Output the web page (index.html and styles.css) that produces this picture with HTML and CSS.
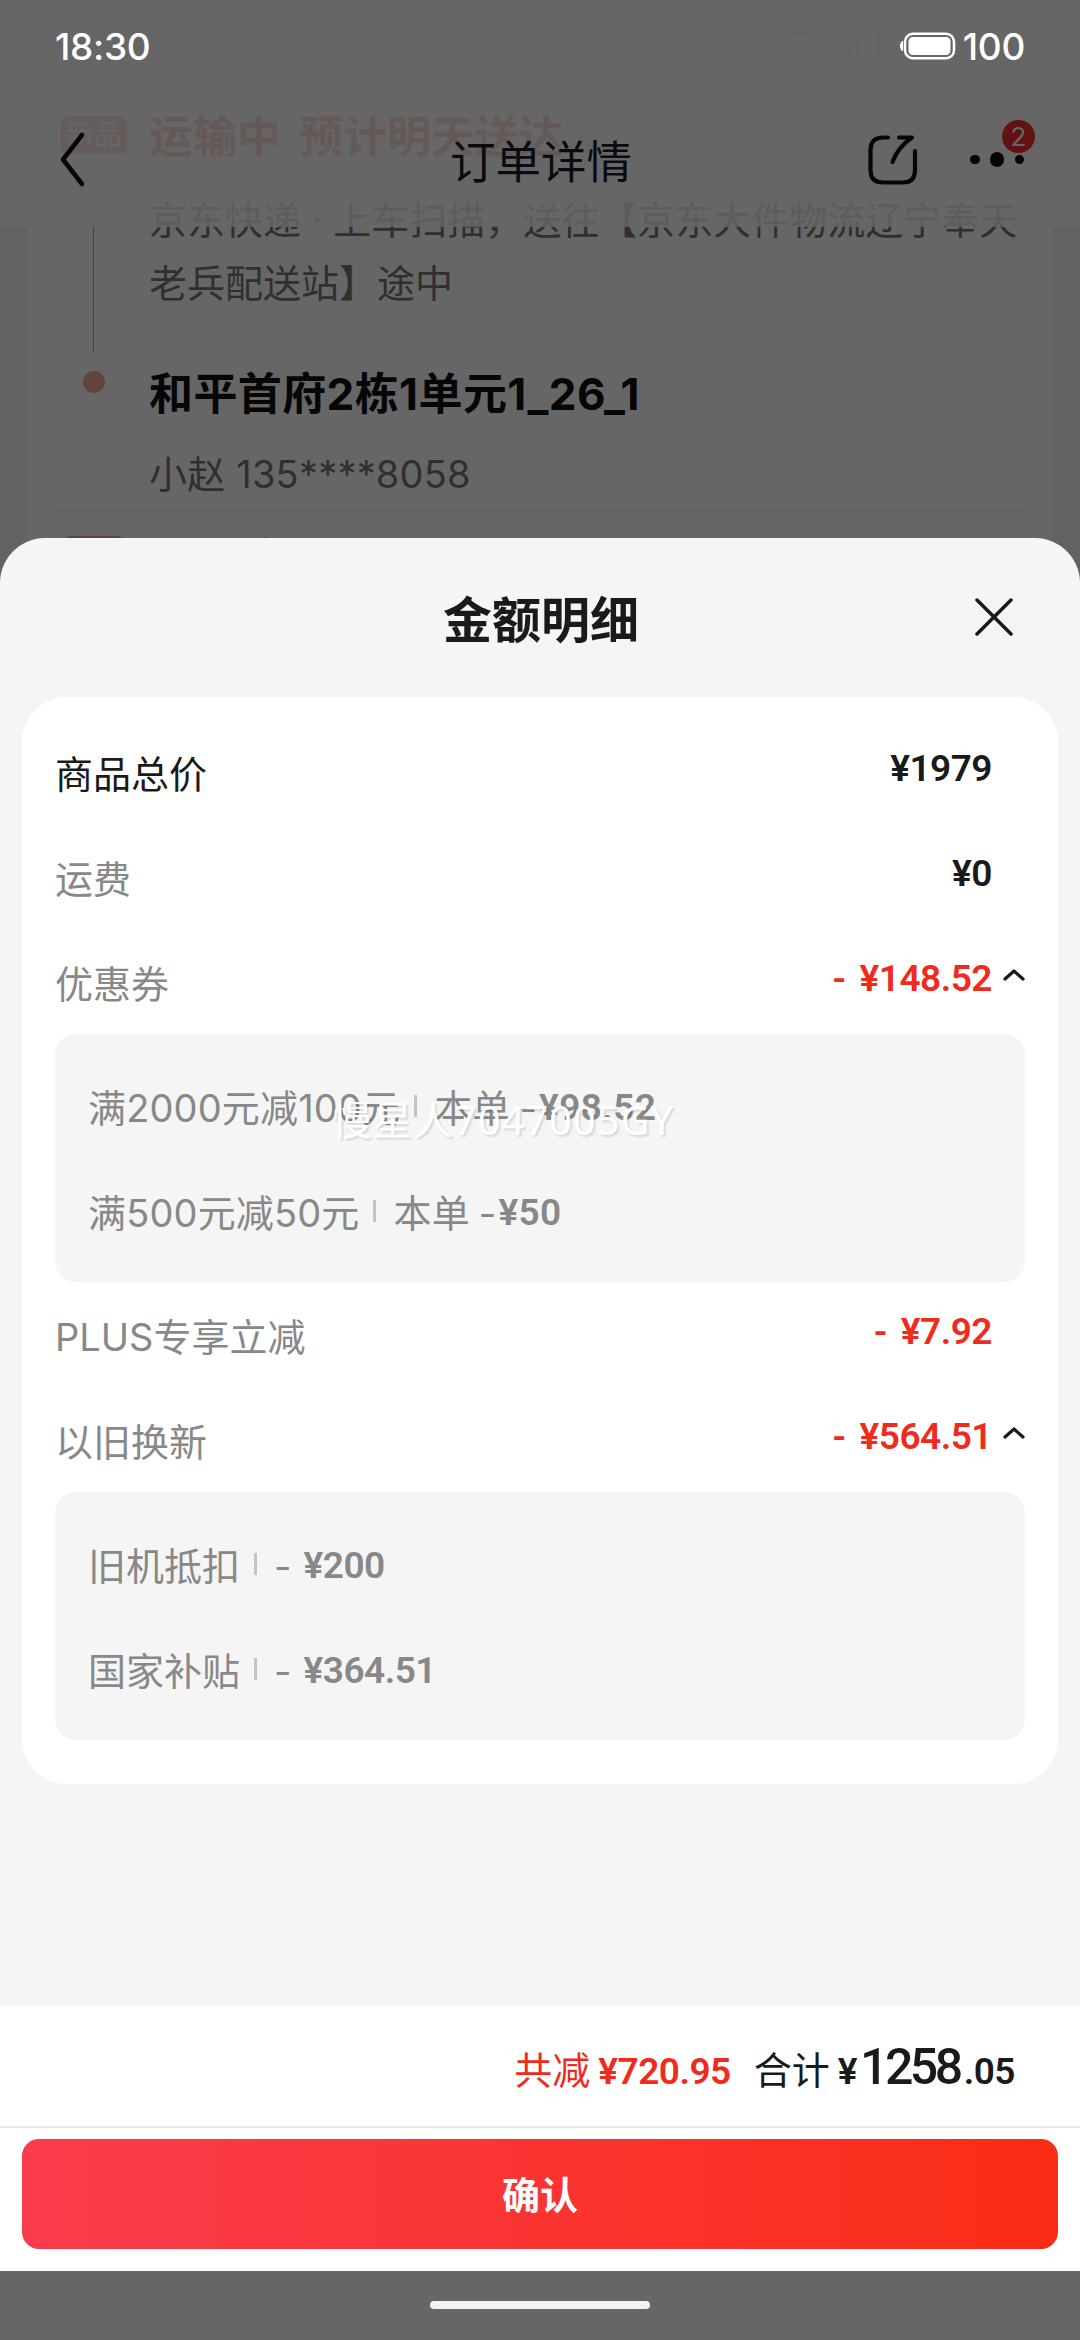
FILE: index.html
```html
<!DOCTYPE html>
<html lang="zh-CN">
<head>
<meta charset="utf-8">
<title>订单详情</title>
<link rel="stylesheet" href="styles.css">
</head>
<body>
<div class="screen">
  <div class="order">
    <section class="track">
      <div class="step">
        <div class="rail"><span class="tag">新品</span></div>
        <div class="info">
          <h2 class="state"><span>运输中</span><span>预计明天送达</span></h2>
          <p class="desc">京东快递 · 上车扫描，送往【京东大件物流辽宁奉天老兵配送站】途中</p>
        </div>
      </div>
      <div class="step address">
        <div class="rail"><span class="dot"></span></div>
        <div class="info">
          <h2 class="place">和平首府2栋1单元1_26_1</h2>
          <p class="contact">小赵 135****8058</p>
        </div>
      </div>
      <div class="next"><span class="next-tag"></span><span class="next-text">下单方式</span></div>
    </section>
    <span class="line"></span>
    <header class="nav">
      <svg class="back" viewBox="0 0 30 60"><path d="M25 5 6 29.500 25 54"/></svg>
      <h1 class="nav-title">订单详情</h1>
      <svg class="share" viewBox="0 0 56 56"><path d="M23 5.500H18Q5.500 5.500 5.500 18V38Q5.500 50.500 18 50.500H38Q50 50.500 50 38V19M34 5.500H47Q33 15 27.500 30"/></svg>
      <div class="more"><i></i><i class="big"></i><i></i><b class="badge">2</b></div>
    </header>
  </div>
  <div class="mask"></div>

  <div class="status">
    <span>18:30</span>
    <span class="power">
      <svg class="signal" viewBox="0 0 100 40"><path d="M2 13Q17 0 32 13M8 20Q17 12 26 20M17 28v3M60 26v8M68 20v14M76 10v24M94 4v30"/></svg>
      <svg class="battery" viewBox="0 0 58 30"><path class="fill" d="M4 9.500Q1 11 1 15T4 20.500Z"/><rect class="case" x="6" y="2.750" width="49" height="24.500" rx="8"/><rect class="fill" x="9.500" y="6" width="42" height="18" rx="4.500"/></svg>
      <span>100</span>
    </span>
  </div>

  <main class="sheet">
    <header class="sheet-head">
      <h2>金额明细</h2>
      <svg class="close" viewBox="0 0 38 38"><path d="M2 2 36 36M36 2 2 36"/></svg>
    </header>
    <section class="card">
      <div class="row strong"><span class="name">商品总价</span><span class="price">¥1979</span></div>
      <div class="row"><span class="name">运费</span><span class="price">¥0</span></div>
      <div class="row off"><span class="name">优惠券</span><span class="price"><em>-</em>¥148.52</span><svg class="chev" viewBox="0 0 22 12"><path d="M2 10 11 2 20 10"/></svg></div>
      <div class="box coupons">
        <div class="sub"><span>满2000元减100元</span><i class="bar"></i><span>本单</span><span class="minus">-</span><span class="num">¥98.52</span></div>
        <div class="sub"><span>满500元减50元</span><i class="bar"></i><span>本单</span><span class="minus">-</span><span class="num">¥50</span></div>
      </div>
      <div class="row off"><span class="name">PLUS专享立减</span><span class="price"><em>-</em>¥7.92</span></div>
      <div class="row off"><span class="name">以旧换新</span><span class="price"><em>-</em>¥564.51</span><svg class="chev" viewBox="0 0 22 12"><path d="M2 10 11 2 20 10"/></svg></div>
      <div class="box">
        <div class="sub"><span>旧机抵扣</span><i class="bar"></i><span class="minus gap">-</span><span class="num">¥200</span></div>
        <div class="sub"><span>国家补贴</span><i class="bar"></i><span class="minus gap">-</span><span class="num">¥364.51</span></div>
      </div>
    </section>
    <div class="spacer"></div>
    <footer class="foot">
      <div class="total">
        <span class="saved">共减<b class="sum">¥720.95</b></span>
        <span class="all">合计<b class="sum">¥</b><b class="major">1258</b><b class="sum">.05</b></span>
      </div>
      <button class="ok">确认</button>
    </footer>
  </main>
  <div class="gesture"><span></span></div>
  <span class="watermark">慢星人7047005GY</span>
</div>
</body>
</html>
```
FILE: styles.css
```css
* { box-sizing: border-box; margin: 0; padding: 0; }
body { font-family: Inter, "Noto Sans CJK SC", sans-serif; font-size: 38px; color: #1a1a1a; }
i, em { font-style: normal; }
svg { display: block; fill: none; stroke: currentColor; stroke-linecap: round; stroke-linejoin: round; }
.screen { position: relative; width: 1080px; height: 2340px; display: flex; flex-direction: column; overflow: hidden; background: #fff; }

/* order page behind the sheet */
.order { position: absolute; left: 0; top: 0; width: 1080px; height: 600px; background: #f5f5f5; overflow: hidden; }
.track { height: 600px; margin: 0 28px; padding-top: 105px; background: #fff; }
.step { display: flex; }
.rail { width: 121px; padding-left: 33px; }
.tag { display: block; width: 66px; height: 38px; margin-top: 11px; border-radius: 6px; background: #f56a5a; color: #fff; font-size: 28px; line-height: 38px; text-align: center; }
.info { flex: 1; }
.state { display: flex; gap: 18px; height: 84px; font-size: 44px; line-height: 64px; font-weight: 700; color: #f5513f; }
.desc { width: 875px; height: 150px; line-height: 63px; font-size: 38px; color: #777; }
.address { height: 171px; padding-top: 22px; }
.dot { display: block; width: 22px; height: 22px; margin: 10px 0 0 22px; border-radius: 50%; background: #f5a79c; }
.place { font-size: 44px; line-height: 66px; letter-spacing: .4px; font-weight: 700; color: #111; }
.contact { margin-top: 14px; line-height: 66px; letter-spacing: .2px; color: #777; }
.next { display: flex; align-items: flex-start; height: 80px; margin: 0 28px; border-top: 2px solid #f4f4f4; padding-top: 24px; }
.next-tag { width: 60px; height: 38px; margin: 0 31px 0 8px; border-radius: 6px; background: #f8a9a2; }
.next-text { margin-top: 2px; font-size: 44px; font-weight: 700; line-height: 44px; }
.line { position: absolute; left: 93px; top: 190px; width: 1px; height: 162px; background: #e39a8b; }
.nav { position: absolute; left: 0; top: 0; width: 1080px; height: 227px; padding: 94px 56px 0 57px; display: flex; align-items: flex-start; background: rgba(255,255,255,.82); color: #1a1d29; }
.back { width: 30px; height: 60px; margin-top: 36px; color: #111; stroke-width: 4.500; }
.nav-title { flex: 1; margin: 37px 0 0 -2px; padding-left: 365px; font-size: 45.500px; line-height: 64px; font-weight: 400; }
.share { width: 56px; height: 56px; margin: 38px 48px 0 0; color: #111; stroke-width: 4.200; }
.more { position: relative; width: 54px; margin: 58px 0 0 1px; display: flex; justify-content: space-between; align-items: center; }
.more i { width: 9.500px; height: 9.500px; border-radius: 50%; background: #0d0d0d; }
.more .big { width: 14.500px; height: 14.500px; }
.badge { position: absolute; left: 32px; top: -32px; width: 33px; height: 33px; border-radius: 50%; background: #f22e2e; color: #fff; font-size: 26px; line-height: 33px; font-weight: 400; text-align: center; }
.mask { position: absolute; inset: 0; background: rgba(0,0,0,.6); }

/* system bar */
.status { position: relative; height: 538px; flex: none; display: flex; justify-content: space-between; align-items: flex-start; padding: 24px 55px 0; color: #fff; font-size: 37px; font-weight: 500; line-height: 46px; letter-spacing: -.3px; }
.power { display: flex; align-items: flex-start; }
.signal { width: 100px; height: 40px; margin: 2px 16px 0 0; stroke-width: 3; color: #636363; }
.battery { width: 58px; height: 30px; margin: 7px 6px 0 0; }
.battery .fill { fill: #fff; stroke: none; }
.battery .case { stroke-width: 2.500; }

/* detail sheet */
.sheet { position: relative; height: 1733px; flex: none; display: flex; flex-direction: column; border-radius: 45px 45px 0 0; background: #f5f5f5; overflow: hidden; }
.sheet-head { height: 159px; flex: none; display: grid; grid-template-columns: 1fr auto 1fr; align-items: center; padding: 0 67px; }
.sheet-head h2 { grid-column: 2; font-size: 49px; line-height: 70px; margin: 7px 0 0 2px; }
.close { width: 38px; height: 38px; justify-self: end; stroke-width: 3.500; margin-top: -1px; }
.card { height: 1087px; flex: none; margin: 0 22px; padding: 22px 33px 0; border-radius: 45px; background: #fff; }
.row { position: relative; height: 105px; display: flex; justify-content: space-between; align-items: center; padding-right: 33px; }
.name { padding-top: 4px; line-height: 56px; color: #888; }
.strong .name { color: #1a1a1a; }
.price, .num, .sum, .major { font-family: Roboto, sans-serif; font-weight: 600; letter-spacing: -.5px; }
.price { margin-top: -6px; line-height: 50px; font-size: 37px; }
.off .price { color: #f02b1d; }
.price em { margin-right: 14px; }
.chev { position: absolute; right: 0; top: 40px; width: 22px; height: 12px; stroke-width: 3.200; }
.box { height: 248px; padding: 19px 33px; border-radius: 21px; background: #f5f5f5; color: #888; }
.sub { height: 105px; padding-top: 4px; display: flex; align-items: center; line-height: 56px; }
.bar { width: 3px; height: 22px; margin: -4px 17px 0 14px; background: #c4c4c4; }
.minus { margin: 0 2px 0 9px; }
.minus.gap { margin: 0 12px 0 0; }
.num { font-size: 37px; }
.coupons .sub { letter-spacing: .15px; }
.coupons .num { letter-spacing: .4px; }
.spacer { flex: 1; }
.foot { flex: none; height: 265px; background: #fff; }
.total { height: 122px; border-bottom: 2px solid #ebe7e7; display: flex; justify-content: flex-end; align-items: baseline; gap: 23px; padding: 34px 65px 0 0; line-height: 60px; }
.saved { color: #f02b1d; }
.sum { margin-left: 8px; font-size: 37px; }
.all .sum:last-child { margin-left: 4px; }
.major { font-size: 50px; margin-left: 3px; letter-spacing: -3.500px; line-height: 50px; font-weight: 500; }
.ok { display: block; width: 1036px; height: 110px; margin: 11px auto 0; border: 0; border-radius: 17px; background: linear-gradient(90deg, #f93c4d, #fb2c16); color: #fff; font: 700 38px/112px Inter, "Noto Sans CJK SC", sans-serif; }
.gesture { position: relative; flex: none; height: 69px; display: flex; justify-content: center; padding-top: 30px; }
.gesture span { width: 220px; height: 8px; border-radius: 4px; background: #f2f2f2; }
.watermark { position: absolute; left: 332px; top: 1092px; font-family: "Noto Sans", "Noto Sans CJK SC", sans-serif; font-size: 39.500px; line-height: 56px; letter-spacing: 1.200px; color: #fff; text-shadow: 2px 2px 2px rgba(0,0,0,.12); white-space: nowrap; }
```
